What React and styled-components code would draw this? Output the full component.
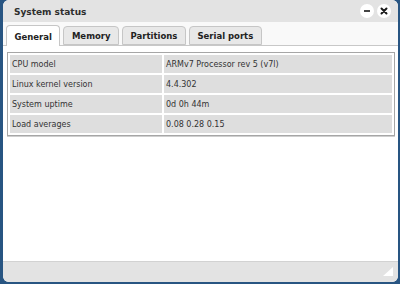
import React, { useState } from "react";
import styled, { createGlobalStyle } from "styled-components";

const Global = createGlobalStyle`
  html, body { margin: 0; padding: 0; background: #285582; }
  body { width: 400px; height: 284px; overflow: hidden; font-family: "DejaVu Sans", Verdana, sans-serif; }
`;

const Desktop = styled.div`
  width: 400px;
  height: 284px;
  background: #285582;
  padding: 0 2px 2px 3px;
  box-sizing: border-box;
`;

const Window = styled.div`
  width: 395px;
  height: 282px;
  background: #fff;
  border-radius: 6px;
  overflow: hidden;
  display: flex;
  flex-direction: column;
`;

const TitleBar = styled.div`
  height: 22px;
  flex: none;
  background: #e3e3e3;
  display: flex;
  align-items: center;
  justify-content: space-between;
  padding: 0 7px 0 11px;
`;

const Title = styled.div`
  font: bold 9px "DejaVu Sans", Verdana, sans-serif;
  color: #2e2e2e;
  margin-top: 1px;
`;

const Buttons = styled.div`
  display: flex;
  gap: 3px;
`;

const RoundButton = styled.div`
  width: 14px;
  height: 14px;
  border-radius: 50%;
  background: #fff;
  display: flex;
  align-items: center;
  justify-content: center;
`;

const TabBar = styled.div`
  height: 24px;
  flex: none;
  box-sizing: border-box;
  background: #f9f9f9;
  border-bottom: 1px solid #c8c8c8;
  display: flex;
  align-items: flex-end;
  gap: 3px;
  padding: 0 0 0 3px;
`;

const Tab = styled.div`
  height: ${p => (p.$active ? "21px" : "19px")};
  box-sizing: border-box;
  margin-bottom: ${p => (p.$active ? "-1px" : "0")};
  padding: 0 7.5px;
  border: 1px solid #c6c6c6;
  border-bottom: ${p => (p.$active ? "none" : "1px solid #c6c6c6")};
  border-radius: 4px 4px 0 0;
  background: ${p => (p.$active ? "#fff" : "#e8e8e8")};
  font: bold 8.5px "DejaVu Sans", Verdana, sans-serif;
  color: #222;
  display: flex;
  align-items: center;
  padding-top: ${p => (p.$active ? "1px" : "0")};
  cursor: pointer;
`;

const Content = styled.div`
  flex: 1;
  background: #fff;
  padding: 6px 3px 0 4px;
`;

const Table = styled.table`
  width: 100%;
  border-collapse: separate;
  border-spacing: 2px;
  border: 1px solid #a6a6a6;
  box-shadow: 0 1px 0 #cfcfcf;
`;

const Cell = styled.td`
  background: #dedede;
  height: 18px;
  padding: 0 2px;
  font: 8px "DejaVu Sans", Verdana, sans-serif;
  color: #333;
  width: ${p => p.$w || "auto"};
  vertical-align: middle;
`;

const StatusBar = styled.div`
  height: 21px;
  flex: none;
  box-sizing: border-box;
  background: #e3e3e3;
  border-top: 1px solid #d2d2d2;
  display: flex;
  justify-content: flex-end;
  align-items: flex-end;
  padding: 0 5px 6px 0;
`;

const rows = [
  ["CPU model", "ARMv7 Processor rev 5 (v7l)"],
  ["Linux kernel version", "4.4.302"],
  ["System uptime", "0d 0h 44m"],
  ["Load averages", "0.08 0.28 0.15"],
];

const tabs = ["General", "Memory", "Partitions", "Serial ports"];

export default function App() {
  const [active, setActive] = useState(0);
  return (
    <Desktop>
      <Global />
      <Window>
        <TitleBar>
          <Title>System status</Title>
          <Buttons>
            <RoundButton>
              <svg width="8" height="8" viewBox="0 0 8 8">
                <rect x="1" y="3" width="6" height="2" fill="#444" />
              </svg>
            </RoundButton>
            <RoundButton>
              <svg width="8" height="8" viewBox="0 0 8 8">
                <path d="M1.5 1.5 L6.5 6.5 M6.5 1.5 L1.5 6.5" stroke="#1a1a1a" strokeWidth="2" strokeLinecap="round" />
              </svg>
            </RoundButton>
          </Buttons>
        </TitleBar>
        <TabBar>
          {tabs.map((t, i) => (
            <Tab key={t} $active={i === active} onClick={() => setActive(i)}>
              {t}
            </Tab>
          ))}
        </TabBar>
        <Content>
          <Table>
            <tbody>
              {rows.map(([k, v]) => (
                <tr key={k}>
                  <Cell $w="148px">{k}</Cell>
                  <Cell>{v}</Cell>
                </tr>
              ))}
            </tbody>
          </Table>
        </Content>
        <StatusBar>
          <svg width="10" height="9" viewBox="0 0 10 9">
            <polygon points="10,0 10,9 0,9" fill="#fff" />
          </svg>
        </StatusBar>
      </Window>
    </Desktop>
  );
}
